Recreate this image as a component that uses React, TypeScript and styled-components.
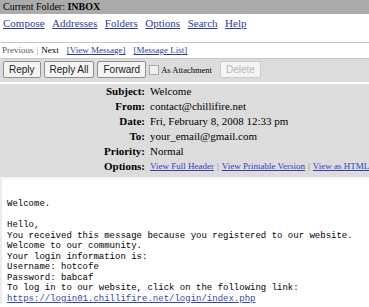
import React from 'react';
import styled, { createGlobalStyle } from 'styled-components';

const GlobalStyle = createGlobalStyle`
  body {
    margin: 0;
    background: #ffffff;
    font-family: "Liberation Serif", "Times New Roman", serif;
    color: #000000;
  }
`;

const linkColor = '#2c3c9e';

const TitleBar = styled.div`
  background: #ababab;
  height: 14px;
  line-height: 14px;
  padding-left: 3px;
  font-family: "Liberation Serif", "Times New Roman", serif;
  font-size: 10px;
`;

const NavBar = styled.nav`
  display: flex;
  gap: 7.5px;
  padding: 3px 3px 0;
  height: 25px;
  font-size: 11px;

  a {
    color: ${linkColor};
    text-decoration: underline;
  }
`;

const PagerRow = styled.div`
  border-top: 1px solid #c8c8c8;
  border-bottom: 1px solid #c8c8c8;
  height: 15px;
  line-height: 15px;
  padding-left: 2px;
  font-size: 9px;

  a {
    color: ${linkColor};
    text-decoration: underline;
    margin-left: 8px;
  }
`;

const Muted = styled.span`
  color: #555555;
`;

const Sep = styled.span`
  color: #888888;
  margin: 0 3px;
`;

const Toolbar = styled.div`
  background: #dcdcdc;
  display: flex;
  align-items: center;
  padding: 2px 3px 4px;
  gap: 3px;
`;

const Button = styled.button<{ $disabled?: boolean }>`
  font-family: "Liberation Sans", Arial, sans-serif;
  font-size: 10px;
  height: 17px;
  padding: 0 5px;
  background: #f4f4f4;
  border: 1px solid ${(p) => (p.$disabled ? '#c9c9c9' : '#8f8f8f')};
  border-radius: 2px;
  color: ${(p) => (p.$disabled ? '#b8b8b8' : '#202020')};
`;

const AttachLabel = styled.label`
  display: flex;
  align-items: center;
  gap: 2px;
  font-size: 8.5px;
  margin-right: 5px;
`;

const CheckBox = styled.span`
  width: 8px;
  height: 8px;
  border: 1px solid #a8a8a8;
  background: #f0f0f0;
`;

const HeaderPanel = styled.div`
  margin-top: 2px;
  background: #dcdcdc;
  display: grid;
  grid-template-columns: 145px 1fr;
  column-gap: 5px;
  padding: 0 0 3px;
  font-size: 11px;
  line-height: 15px;
  border-bottom: 2px solid #f4f4f4;
`;

const Label = styled.div`
  text-align: right;
  font-weight: bold;
`;

const Value = styled.div`
  white-space: nowrap;
  overflow: hidden;
`;

const SmallLinks = styled.div`
  font-size: 9px;
  white-space: nowrap;

  a {
    color: #3340c4;
    text-decoration: underline;
  }
`;

const Body = styled.div`
  padding: 20px 5px 0;
  border-left: 2px solid #ececec;
  font-family: "Liberation Mono", "Courier New", monospace;
  font-size: 9px;
  line-height: 10.5px;
  white-space: pre;

  a {
    color: #3645b0;
    text-decoration: underline;
  }
`;

const headers: Array<[string, string]> = [
  ['Subject:', 'Welcome'],
  ['From:', 'contact@chillifire.net'],
  ['Date:', 'Fri, February 8, 2008 12:33 pm'],
  ['To:', 'your_email@gmail.com'],
  ['Priority:', 'Normal'],
];

const navItems = ['Compose', 'Addresses', 'Folders', 'Options', 'Search', 'Help'];

const App: React.FC = () => (
  <>
    <GlobalStyle />
    <TitleBar>
      Current Folder:
      {' '}
      <b>INBOX</b>
    </TitleBar>
    <NavBar>
      {navItems.map((item) => (
        <a key={item} href="#">{item}</a>
      ))}
    </NavBar>
    <PagerRow>
      <Muted>Previous</Muted>
      <Sep>|</Sep>
      Next
      <a href="#">[View Message]</a>
      <a href="#">[Message List]</a>
    </PagerRow>
    <Toolbar>
      <Button>Reply</Button>
      <Button>Reply All</Button>
      <Button>Forward</Button>
      <AttachLabel>
        <CheckBox />
        As Attachment
      </AttachLabel>
      <Button $disabled>Delete</Button>
    </Toolbar>
    <HeaderPanel>
      {headers.map(([label, value]) => (
        <React.Fragment key={label}>
          <Label>{label}</Label>
          <Value>{value}</Value>
        </React.Fragment>
      ))}
      <Label>Options:</Label>
      <SmallLinks>
        <a href="#">View Full Header</a>
        <Sep>|</Sep>
        <a href="#">View Printable Version</a>
        <Sep>|</Sep>
        <a href="#">View as HTML</a>
      </SmallLinks>
    </HeaderPanel>
    <Body>
      {'Welcome.\n\nHello,\nYou received this message because you registered to our website.\nWelcome to our community.\nYour login information is:\nUsername: hotcofe\nPassword: babcaf\nTo log in to our website, click on the following link:\n'}
      <a href="#">https://login01.chillifire.net/login/index.php</a>
    </Body>
  </>
);

export default App;
